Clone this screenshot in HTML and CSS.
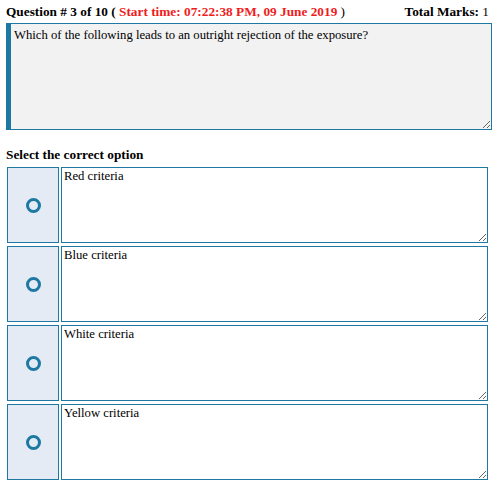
FILE: index.html
```
<!DOCTYPE html>
<html>
<head>
<meta charset="utf-8">
<link rel="stylesheet" href="styles.css">
</head>
<body>
<div class="page">
  <div class="header">
    <div class="qnum"><b>Question # 3 of 10</b> <b>(</b> <b class="time">Start time: 07:22:38 PM, 09 June 2019</b> )</div>
    <div class="marks"><b>Total Marks:</b> 1</div>
  </div>
  <textarea class="question" readonly>Which of the following leads to an outright rejection of the exposure?</textarea>
  <div class="select">Select the correct option</div>
  <div class="options">
    <div class="radio-cell"><span class="radio"></span></div>
    <textarea class="answer" readonly>Red criteria</textarea>
    <div class="radio-cell"><span class="radio"></span></div>
    <textarea class="answer" readonly>Blue criteria</textarea>
    <div class="radio-cell"><span class="radio"></span></div>
    <textarea class="answer" readonly>White criteria</textarea>
    <div class="radio-cell"><span class="radio"></span></div>
    <textarea class="answer" readonly>Yellow criteria</textarea>
  </div>
</div>
</body>
</html>
```
FILE: styles.css
```
html, body {
  margin: 0;
  padding: 0;
  background: #fff;
}
body {
  font-family: "Liberation Serif", "Times New Roman", serif;
  color: #000;
}
.page {
  padding: 4px 8px 0 6px;
}
.header {
  display: flex;
  justify-content: space-between;
  font-size: 13.3px;
  line-height: 16px;
  height: 19px;
}
.time {
  color: #f01c1c;
}
.question {
  display: block;
  box-sizing: border-box;
  width: 486px;
  height: 107px;
  margin: 0;
  padding: 4px 3px;
  border: 1px solid #1d78a2;
  border-left: 5px solid #1d78a2;
  background: #f2f2f2;
  font-family: "Liberation Serif", "Times New Roman", serif;
  font-size: 12.7px;
  line-height: 15px;
  color: #000;
  resize: vertical;
  outline: none;
}
.select {
  font-weight: bold;
  font-size: 13.3px;
  line-height: 16px;
  margin-top: 17px;
  margin-bottom: 4px;
}
.options {
  display: grid;
  grid-template-columns: 52px 427px;
  grid-auto-rows: 76px;
  column-gap: 2px;
  row-gap: 3px;
  margin-left: 1px;
}
.radio-cell {
  box-sizing: border-box;
  border: 1px solid #1d78a2;
  background: #e5ebf5;
  display: flex;
  align-items: center;
  justify-content: center;
}
.radio {
  box-sizing: border-box;
  width: 15px;
  height: 15px;
  border: 3px solid #1d78a2;
  border-radius: 50%;
  margin-left: 1px;
}
.answer {
  box-sizing: border-box;
  width: 100%;
  height: 100%;
  margin: 0;
  padding: 1px 2px;
  border: 1px solid #1d78a2;
  background: #fff;
  font-family: "Liberation Serif", "Times New Roman", serif;
  font-size: 12.7px;
  line-height: 15px;
  color: #000;
  resize: vertical;
  outline: none;
}
```
